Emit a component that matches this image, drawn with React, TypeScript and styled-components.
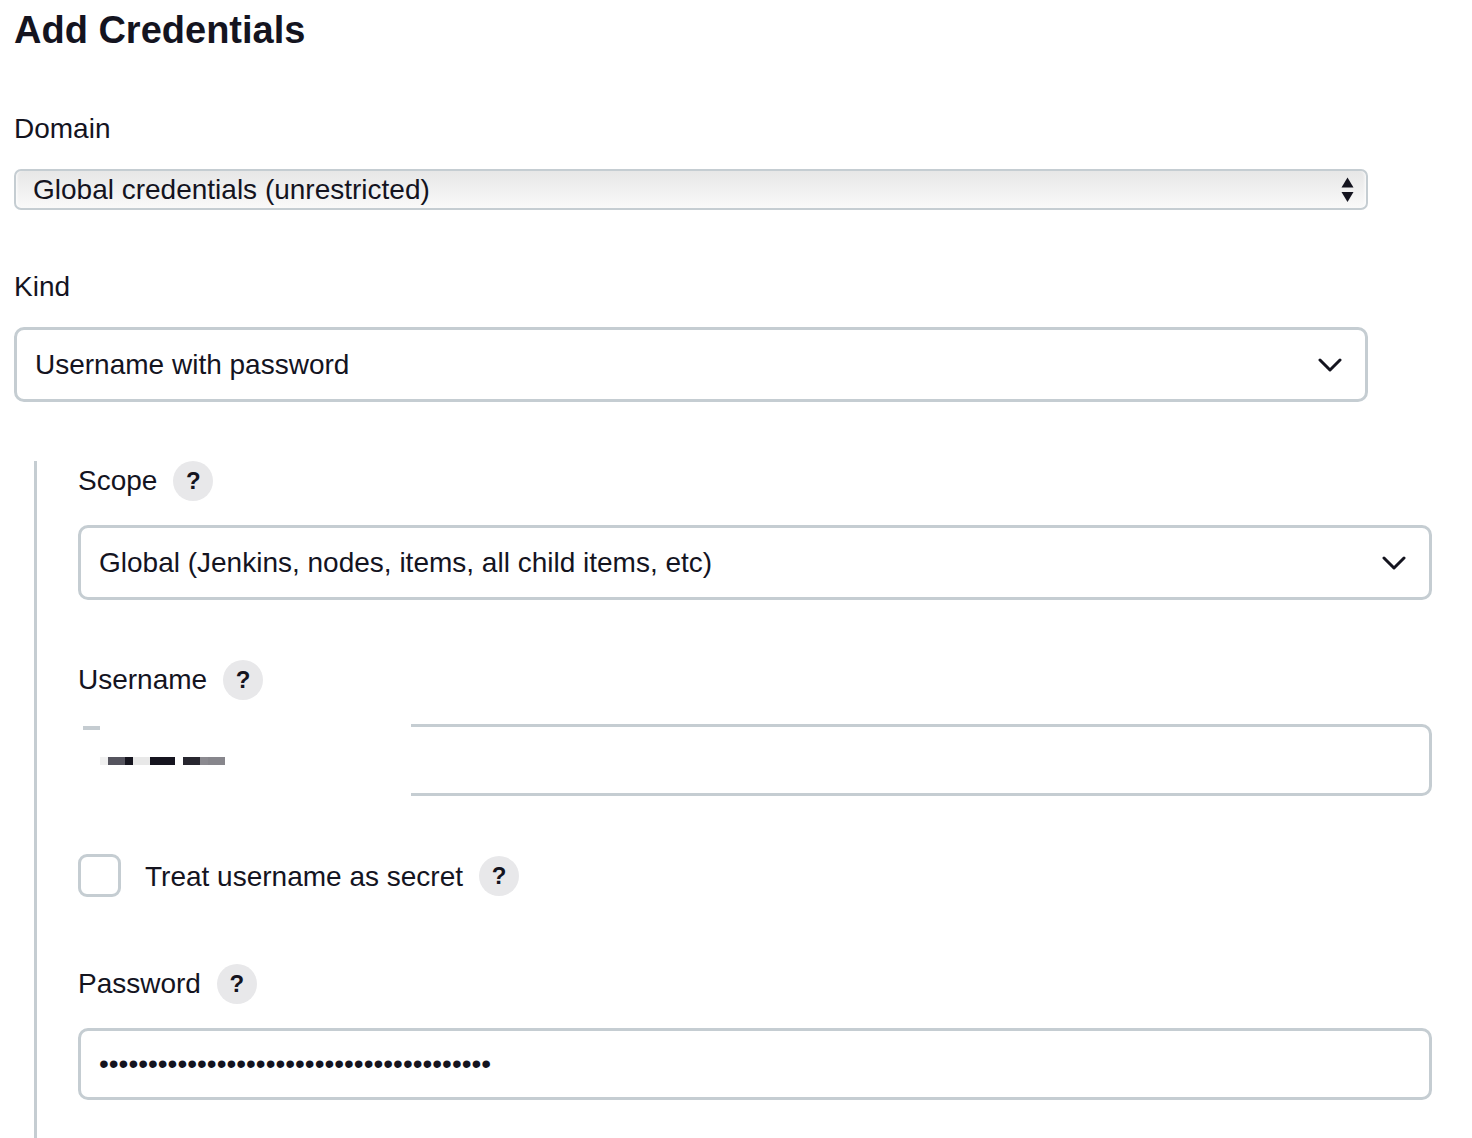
import React from 'react'
import styled, { createGlobalStyle } from 'styled-components'

const GlobalStyle = createGlobalStyle`
  html, body {
    margin: 0;
    padding: 0;
    background: #ffffff;
  }
  body {
    font-family: "Liberation Sans", Arial, Helvetica, sans-serif;
    color: #14141f;
  }
`

const Page = styled.div`
  padding: 6px 0 0 14px;
  min-height: 1138px;
  box-sizing: border-box;
`

const Title = styled.h1`
  margin: 0;
  font-size: 38px;
  line-height: 48px;
  font-weight: 700;
  color: #14141f;
`

const Field = styled.div<{ $top: number }>`
  width: 1354px;
  margin-top: ${(p) => p.$top}px;
  display: flex;
  flex-direction: column;
`

const LabelRow = styled.div`
  display: flex;
  align-items: center;
  gap: 16px;
  height: 40px;
  margin-bottom: 24px;
`

const PlainLabel = styled.div`
  font-size: 28px;
  line-height: 34px;
  margin-bottom: 23px;
`

const LabelText = styled.span`
  font-size: 28px;
  line-height: 34px;
`

const Help = styled.span`
  width: 40px;
  height: 40px;
  border-radius: 50%;
  background: #e8e8ea;
  display: inline-flex;
  align-items: center;
  justify-content: center;
  font-size: 24px;
  font-weight: 700;
  color: #14141f;
  flex-shrink: 0;
`

const ClassicSelect = styled.div`
  height: 41px;
  box-sizing: border-box;
  border: 2px solid #c5cdd2;
  border-radius: 7px;
  background: linear-gradient(to bottom, #e7e7e7 0%, #f1f1f1 55%, #f9f9f9 100%);
  box-shadow: inset 3px 0 3px -2px rgba(255, 255, 255, 0.9), inset -3px 0 3px -2px rgba(255, 255, 255, 0.9);
  display: flex;
  align-items: center;
  justify-content: space-between;
  padding: 0 12px 0 17px;
  font-size: 28px;
  color: #14141f;
`

const Box = styled.div<{ $h: number }>`
  position: relative;
  height: ${(p) => p.$h}px;
  box-sizing: border-box;
  border: 3px solid #c5cdd2;
  border-radius: 10px;
  background: #ffffff;
  display: flex;
  align-items: center;
  justify-content: space-between;
  padding: 0 23px 0 18px;
  font-size: 28px;
  color: #14141f;
`

const PasswordInput = styled.input`
  border: none;
  outline: none;
  padding: 0;
  margin: 0;
  width: 100%;
  background: transparent;
  font-family: "Liberation Sans", Arial, sans-serif;
  font-size: 28px;
  color: #14141f;
`

const Nested = styled.div`
  margin: 59px 0 0 20px;
  border-left: 3px solid #c5cdd2;
  padding: 0 0 60px 41px;
`

const CheckRow = styled.div`
  display: flex;
  align-items: center;
  height: 43px;
  margin-top: 58px;
`

const CheckBox = styled.span`
  width: 43px;
  height: 43px;
  box-sizing: border-box;
  border: 3px solid #c5cdd2;
  border-radius: 9px;
  background: #fff;
  margin-right: 24px;
`

const CheckLabel = styled.span`
  font-size: 28px;
  line-height: 34px;
  margin-right: 16px;
  padding-top: 3px;
`

const Redaction = styled.div`
  position: absolute;
  left: -9px;
  top: -9px;
  width: 339px;
  height: 82px;
  background: #ffffff;
`

const Chevron = () => (
  <svg width="24" height="16" viewBox="0 0 24 16" fill="none">
    <path d="M2 3 L12 13 L22 3" stroke="#14141f" strokeWidth="3" strokeLinecap="round" strokeLinejoin="round" />
  </svg>
)

const UpDown = () => (
  <svg width="13" height="26" viewBox="0 0 13 26">
    <path d="M6.5 0.5 L12.5 10.5 L0.5 10.5 Z" fill="#14141f" />
    <path d="M0.5 15 L12.5 15 L6.5 25 Z" fill="#14141f" />
  </svg>
)

const RedactPixels = () => (
  <svg width="339" height="82" viewBox="0 0 339 82">
    <rect x="11" y="8" width="17" height="4" fill="#c5ccd1" />
    <rect x="28" y="39" width="8" height="8" fill="#f0f0f0" />
    <rect x="36" y="39" width="17" height="8" fill="#55545e" />
    <rect x="53" y="39" width="8" height="8" fill="#16151f" />
    <rect x="61" y="39" width="17" height="8" fill="#e8e8e8" />
    <rect x="78" y="39" width="25" height="8" fill="#15141f" />
    <rect x="111" y="39" width="17" height="8" fill="#27262f" />
    <rect x="128" y="39" width="8" height="8" fill="#8b8a90" />
    <rect x="136" y="39" width="17" height="8" fill="#87868c" />
  </svg>
)

const HelpIcon = () => <Help>?</Help>

const App: React.FC = () => (
  <>
    <GlobalStyle />
    <Page>
      <Title>Add Credentials</Title>

      <Field $top={58}>
        <PlainLabel>Domain</PlainLabel>
        <ClassicSelect>
          <span>Global credentials (unrestricted)</span>
          <UpDown />
        </ClassicSelect>
      </Field>

      <Field $top={60}>
        <PlainLabel>Kind</PlainLabel>
        <Box $h={75}>
          <span>Username with password</span>
          <Chevron />
        </Box>
      </Field>

      <Nested>
        <Field $top={0}>
          <LabelRow>
            <LabelText>Scope</LabelText>
            <HelpIcon />
          </LabelRow>
          <Box $h={75}>
            <span>Global (Jenkins, nodes, items, all child items, etc)</span>
            <Chevron />
          </Box>
        </Field>

        <Field $top={60}>
          <LabelRow>
            <LabelText>Username</LabelText>
            <HelpIcon />
          </LabelRow>
          <Box $h={72}>
            <Redaction>
              <RedactPixels />
            </Redaction>
          </Box>
        </Field>

        <CheckRow>
          <CheckBox />
          <CheckLabel>Treat username as secret</CheckLabel>
          <HelpIcon />
        </CheckRow>

        <Field $top={67}>
          <LabelRow>
            <LabelText>Password</LabelText>
            <HelpIcon />
          </LabelRow>
          <Box $h={72}>
            <PasswordInput type="password" readOnly value={'x'.repeat(40)} />
          </Box>
        </Field>
      </Nested>
    </Page>
  </>
)

export default App
